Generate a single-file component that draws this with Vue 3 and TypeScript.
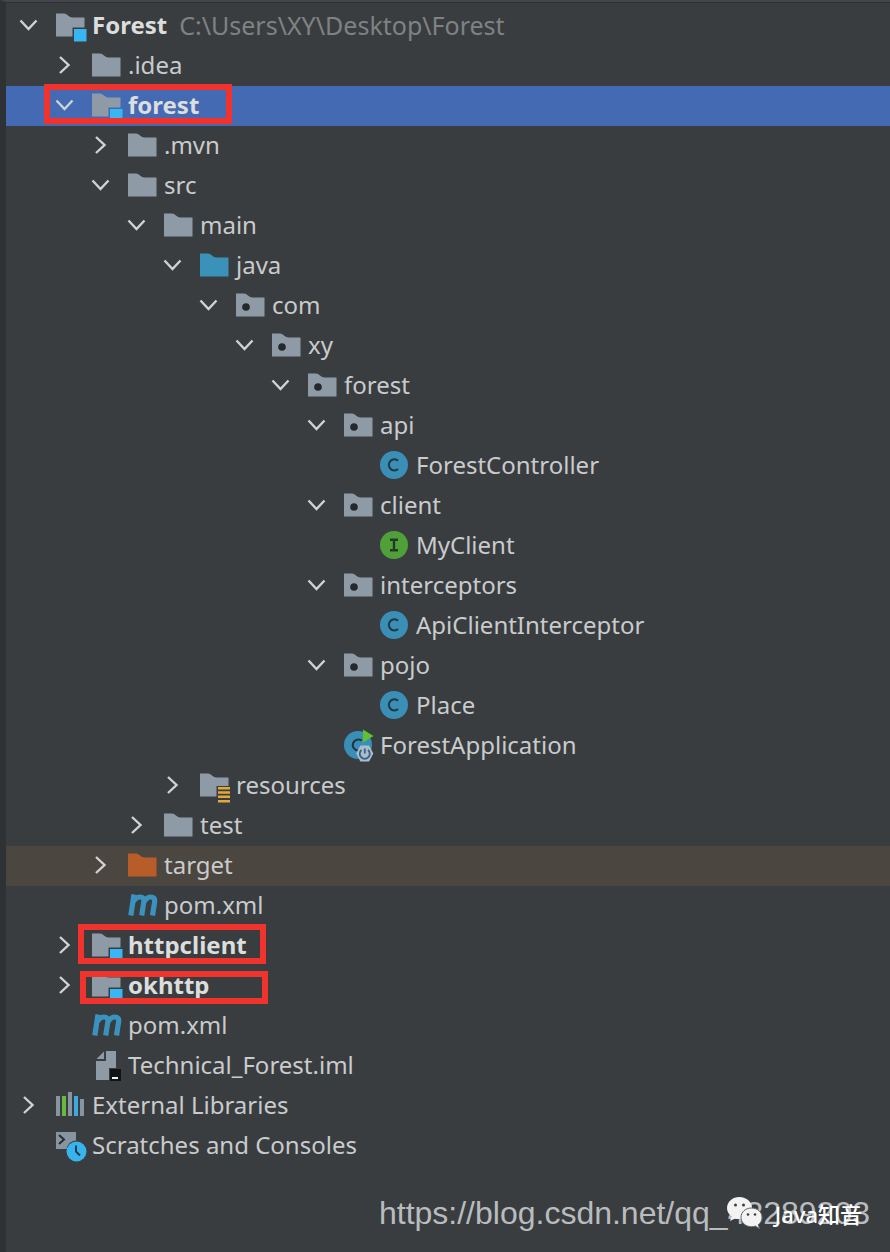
<script setup lang="ts">
import { computed, ref } from 'vue'

type IconKind =
  | 'folder' | 'module' | 'source' | 'package' | 'resources' | 'excluded'
  | 'class' | 'interface' | 'application' | 'maven' | 'iml' | 'libraries' | 'scratches'

interface TreeNode {
  id: number
  depth: number
  label: string
  icon: IconKind
  branch?: boolean
  open?: boolean
  bold?: boolean
  path?: string
  tone?: 'selected' | 'excluded'
  mark?: 'wide' | 'tall' | 'short'
}

const nodes = ref<TreeNode[]>([
  { id: 1, depth: 0, label: 'Forest', icon: 'module', branch: true, open: true, bold: true, path: 'C:\\Users\\XY\\Desktop\\Forest' },
  { id: 2, depth: 1, label: '.idea', icon: 'folder', branch: true },
  { id: 3, depth: 1, label: 'forest', icon: 'module', branch: true, open: true, bold: true, tone: 'selected', mark: 'wide' },
  { id: 4, depth: 2, label: '.mvn', icon: 'folder', branch: true },
  { id: 5, depth: 2, label: 'src', icon: 'folder', branch: true, open: true },
  { id: 6, depth: 3, label: 'main', icon: 'folder', branch: true, open: true },
  { id: 7, depth: 4, label: 'java', icon: 'source', branch: true, open: true },
  { id: 8, depth: 5, label: 'com', icon: 'package', branch: true, open: true },
  { id: 9, depth: 6, label: 'xy', icon: 'package', branch: true, open: true },
  { id: 10, depth: 7, label: 'forest', icon: 'package', branch: true, open: true },
  { id: 11, depth: 8, label: 'api', icon: 'package', branch: true, open: true },
  { id: 12, depth: 9, label: 'ForestController', icon: 'class' },
  { id: 13, depth: 8, label: 'client', icon: 'package', branch: true, open: true },
  { id: 14, depth: 9, label: 'MyClient', icon: 'interface' },
  { id: 15, depth: 8, label: 'interceptors', icon: 'package', branch: true, open: true },
  { id: 16, depth: 9, label: 'ApiClientInterceptor', icon: 'class' },
  { id: 17, depth: 8, label: 'pojo', icon: 'package', branch: true, open: true },
  { id: 18, depth: 9, label: 'Place', icon: 'class' },
  { id: 19, depth: 8, label: 'ForestApplication', icon: 'application' },
  { id: 20, depth: 4, label: 'resources', icon: 'resources', branch: true },
  { id: 21, depth: 3, label: 'test', icon: 'folder', branch: true },
  { id: 22, depth: 2, label: 'target', icon: 'excluded', branch: true, tone: 'excluded' },
  { id: 23, depth: 2, label: 'pom.xml', icon: 'maven' },
  { id: 24, depth: 1, label: 'httpclient', icon: 'module', branch: true, bold: true, mark: 'tall' },
  { id: 25, depth: 1, label: 'okhttp', icon: 'module', branch: true, bold: true, mark: 'short' },
  { id: 26, depth: 1, label: 'pom.xml', icon: 'maven' },
  { id: 27, depth: 1, label: 'Technical_Forest.iml', icon: 'iml' },
  { id: 28, depth: 0, label: 'External Libraries', icon: 'libraries', branch: true },
  { id: 29, depth: 0, label: 'Scratches and Consoles', icon: 'scratches' },
])

const visible = computed(() => {
  const out: TreeNode[] = []
  let hiddenBelow = Infinity
  for (const n of nodes.value) {
    if (n.depth > hiddenBelow) continue
    hiddenBelow = n.branch && !n.open ? n.depth : Infinity
    out.push(n)
  }
  return out
})

const folderKinds: IconKind[] = ['folder', 'source', 'package', 'excluded']
const folderFill = (k: IconKind) => (k === 'source' ? '#3a92b8' : k === 'excluded' ? '#b85d29' : '#8e9ba7')
</script>

<template>
  <main class="panel">
    <ul class="tree" role="tree" aria-label="Project">
      <li
        v-for="n in visible"
        :key="n.id"
        class="row"
        :class="n.tone"
        role="treeitem"
        :aria-level="n.depth + 1"
        :aria-expanded="n.branch ? !!n.open : undefined"
        :style="{ '--depth': n.depth }"
      >
        <button v-if="n.branch" class="toggle" type="button" :aria-label="'Toggle ' + n.label" @click="n.open = !n.open">
          <svg viewBox="0 0 20 20" class="chevron">
            <path :d="n.open ? 'M2.500 5.500l8 8.500 8-8.500' : 'M6 2l8.500 8L6 18'" />
          </svg>
        </button>
        <span v-else class="toggle"></span>

        <svg class="icon" viewBox="0 0 32 32" aria-hidden="true">
          <g v-if="folderKinds.includes(n.icon)">
            <path d="M0 4.500h8q2 0 4 2t4.500 2H28.500V27.500H0z" :fill="folderFill(n.icon)" />
            <circle v-if="n.icon === 'package'" cx="10" cy="18" r="3.800" fill="#26292c" />
          </g>
          <g v-else-if="n.icon === 'module'">
            <path d="M0 4.500h8q2 0 4 2t4.500 2H28.500V18.500H16.500V27.500H0z" fill="#8e9ba7" />
            <path d="M18 20h12.500v12.500H18z" fill="#37b6f3" />
          </g>
          <g v-else-if="n.icon === 'resources'">
            <path d="M0 4.500h8q2 0 4 2t4.500 2H28.500V17H16.500V27.500H0z" fill="#8e9ba7" />
            <path d="M18 18h12v2.500H18zM18 22.300h12v2.500H18zM18 26.600h12v2.500H18zM18 30.900h12v2.500H18z" fill="#e0a93a" />
          </g>
          <g v-else-if="n.icon === 'class'">
            <circle cx="14" cy="16" r="14" fill="#3a8fb7" />
            <path d="M18 11.700A5.500 5.500 0 1 0 18 20" fill="none" stroke="#243640" stroke-width="2.200" />
          </g>
          <g v-else-if="n.icon === 'interface'">
            <circle cx="14" cy="16" r="14" fill="#50a03a" />
            <path d="M10 10.800h8M10 21.200h8M14 10.800v10.400" fill="none" stroke="#253a24" stroke-width="2.400" />
          </g>
          <g v-else-if="n.icon === 'application'">
            <circle cx="14" cy="16" r="14" fill="#3a8fb7" />
            <path d="M17.700 11.700A5.500 5.500 0 1 0 14 21.500" fill="none" stroke="#243640" stroke-width="2.200" />
            <path d="M19 0.500l10.500 6.500L19 13.500z" fill="#5fc22e" />
            <path d="M17 17.500h7.500l3.700 7-3.700 7H17l-3.700-7z" fill="#a9bdcf" stroke="#a9bdcf" stroke-width="2" stroke-linejoin="round" />
            <path d="M17.500 21a5 5 0 1 0 6.500 0M20.800 19.500v5" fill="none" stroke="#3a617f" stroke-width="1.800" />
          </g>
          <g v-else-if="n.icon === 'maven'" fill="none" stroke="#3a93bf" stroke-width="5.200">
            <path d="M6 5.500L2.800 26.500M4.500 14Q7.500 8 12 8Q16.500 8 15.800 13L13.700 26.500M15.500 14Q18.500 8 22.500 8Q27.500 8 26.600 13L24.500 26.500" />
          </g>
          <g v-else-if="n.icon === 'iml'">
            <path d="M14 2h10v17h-7v12H4V12h10z" fill="#8e9ba7" />
            <path d="M12 2.500V10H4.500z" fill="#8e9ba7" />
            <path d="M18 20h11v12H18z" fill="#111315" />
            <path d="M20 28h6v2h-6z" fill="#f0f0f0" />
          </g>
          <g v-else-if="n.icon === 'libraries'">
            <path d="M0 7h4v20H0zM12 3h4v24h-4zM24 10h4v17h-4z" fill="#8795a1" />
            <path d="M6 7h4v20H6z" fill="#67b93e" />
            <path d="M18 7h4v20h-4z" fill="#3ba9e2" />
          </g>
          <g v-else>
            <path d="M0 3h20v8.500a11 11 0 0 0-9.500 8.500H0z" fill="#8795a1" />
            <path d="M3 6l5 4.500-5 4.500" fill="none" stroke="#292d30" stroke-width="2" />
            <circle cx="20.500" cy="22.500" r="10" fill="#37b3ee" />
            <path d="M20 16.500v6l4 4" fill="none" stroke="#263b48" stroke-width="2" />
          </g>
        </svg>

        <span class="label" :class="{ bold: n.bold }">{{ n.label }}</span>
        <span v-if="n.path" class="path">{{ n.path }}</span>
        <span v-if="n.mark" class="mark" :class="n.mark"></span>
      </li>
    </ul>

    <footer class="credits">
      <span class="url">https://blog.csdn.net/qq_43289203</span>
      <span class="account">
        <svg viewBox="0 0 36 32" class="bubbles" aria-hidden="true">
          <path d="M12.500 0C5.500 0 0 4.800 0 11c0 3.500 1.800 6.500 4.600 8.500L3 24l5-2.500c1.500.4 3 .6 4.500.6 7 0 12.500-4.900 12.500-11S19.500 0 12.500 0z" fill="#f3f3f3" />
          <path d="M24.500 11C18.500 11 14 15 14 20.300s4.500 9.400 10.500 9.400c1.400 0 2.700-.2 3.900-.6l4.100 2.600-1.200-4c2.300-1.700 3.700-4.400 3.700-7.400C35 15 30.500 11 24.500 11z" fill="#f3f3f3" stroke="#62666a" stroke-width="1" />
          <g fill="#3b3f42"><circle cx="8.500" cy="8" r="1.500" /><circle cx="16.500" cy="8" r="1.500" /><circle cx="21" cy="17.500" r="1.300" /><circle cx="28" cy="17.500" r="1.300" /></g>
        </svg>
        <span>Java知音</span>
      </span>
    </footer>
  </main>
</template>

<style>
body {
  background: #3a3d40;
}
</style>

<style scoped>
.panel {
  min-height: 100vh;
  box-sizing: border-box;
  border-top: 2px solid #42464a;
  border-left: 6px solid #2f3234;
  padding-top: 4px;
  background: #3a3d40;
  box-shadow: inset 0 1px #2c3033;
  color: #c9cbcc;
  font-family: "Noto Sans", "Noto Sans CJK SC", sans-serif;
  font-size: 24px;
  overflow: hidden;
}
.tree {
  list-style: none;
  margin: 0;
  padding: 0;
}
.row {
  position: relative;
  display: flex;
  align-items: center;
  height: 40px;
  padding-left: calc(12px + var(--depth) * 36px);
  white-space: nowrap;
}
.row.selected {
  background: #446ab3;
}
.row.excluded {
  background: #4b463f;
}
.toggle {
  width: 22px;
  height: 24px;
  flex: none;
  margin: 0 16px 2px 0;
  padding: 0;
  border: 0;
  background: none;
}
.toggle:not(button) {
  visibility: hidden;
}
.chevron {
  display: block;
  width: 20px;
  height: 20px;
  fill: none;
  stroke: #d0d2d3;
  stroke-width: 2.4;
}
.icon {
  width: 32px;
  height: 32px;
  flex: none;
  margin: 0 4px 2px 0;
  overflow: visible;
}
.label,
.path {
  line-height: 38px;
  padding-bottom: 2px;
}
.bold {
  font-weight: 700;
  color: #dcdddd;
}
.path {
  margin-left: 12px;
  font-size: 25px;
  color: #7f8284;
}
.mark {
  position: absolute;
  box-sizing: border-box;
  width: 188px;
  height: 40px;
  top: -2px;
  border: 6px solid #f0342d;
  pointer-events: none;
}
.mark.wide {
  left: 38px;
}
.mark.tall {
  left: 72px;
}
.mark.short {
  left: 74px;
  top: 5px;
  height: 33px;
}
.credits {
  display: grid;
  justify-content: end;
  align-items: center;
  margin: 28px 20px 0 0;
  height: 38px;
}
.url,
.account {
  grid-area: 1 / 1;
}
.url {
  font-family: "Liberation Sans", Arial, sans-serif;
  font-size: 32px;
  color: #b9bcbe;
}
.account {
  display: flex;
  align-items: center;
  justify-content: flex-end;
  gap: 12px;
  margin-right: 8px;
  font-size: 22px;
  font-weight: 500;
  color: #fff;
}
.bubbles {
  width: 36px;
  height: 32px;
}
</style>
